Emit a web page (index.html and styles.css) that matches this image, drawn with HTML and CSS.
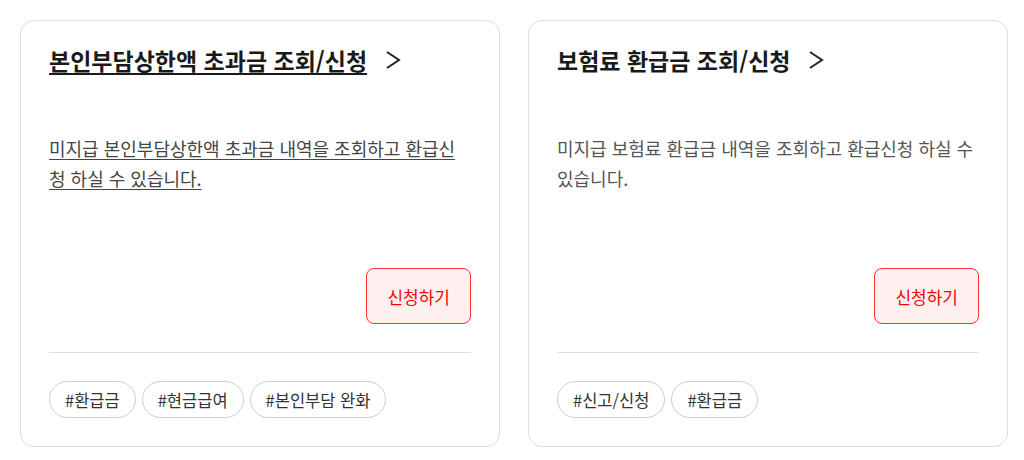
FILE: index.html
```html
<!DOCTYPE html>
<html lang="ko">
<head>
    <meta charset="UTF-8">
    <meta name="viewport" content="width=device-width, initial-scale=1.0">
    <title>환급금 조회/신청</title>
    <link rel="stylesheet" href="styles.css">
</head>
<body>
    <div class="card-list">
        <div class="card is-hover">
            <a class="card-title" href="#">
                <span class="title-text">본인부담상한액 초과금 조회/신청</span>
                <svg class="chevron" width="16" height="20" viewBox="0 0 16 20">
                    <polyline points="2,2 14,10 2,18" fill="none" stroke="#222" stroke-width="2"/>
                </svg>
            </a>
            <p class="card-desc">미지급 본인부담상한액 초과금 내역을 조회하고 환급신청 하실 수 있습니다.</p>
            <div class="card-action">
                <button class="apply-button">신청하기</button>
            </div>
            <div class="card-tags">
                <span class="tag">#환급금</span>
                <span class="tag">#현금급여</span>
                <span class="tag">#본인부담 완화</span>
            </div>
        </div>
        <div class="card">
            <a class="card-title" href="#">
                <span class="title-text">보험료 환급금 조회/신청</span>
                <svg class="chevron" width="16" height="20" viewBox="0 0 16 20">
                    <polyline points="2,2 14,10 2,18" fill="none" stroke="#222" stroke-width="2"/>
                </svg>
            </a>
            <p class="card-desc">미지급 보험료 환급금 내역을 조회하고 환급신청 하실 수 있습니다.</p>
            <div class="card-action">
                <button class="apply-button">신청하기</button>
            </div>
            <div class="card-tags">
                <span class="tag">#신고/신청</span>
                <span class="tag">#환급금</span>
            </div>
        </div>
    </div>
</body>
</html>
```

FILE: styles.css
```css
body {
    font-family: "Noto Sans CJK KR", "Noto Sans", sans-serif;
    margin: 0;
    padding: 20px 0 0 20px;
    background-color: #ffffff;
    color: #222;
}
.card-list {
    display: flex;
    gap: 28px;
}
.card {
    width: 480px;
    box-sizing: border-box;
    border: 1px solid #dddddd;
    border-radius: 14px;
    padding: 24px 28px 28px;
    display: flex;
    flex-direction: column;
}
.card-title {
    display: flex;
    align-items: center;
    gap: 18px;
    font-size: 23px;
    font-weight: 700;
    line-height: 30px;
    color: #1a1a1a;
    text-decoration: none;
}
.chevron {
    flex-shrink: 0;
}
.card-desc {
    margin: 58px 0 0;
    font-size: 18px;
    line-height: 30px;
    color: #555;
    word-break: break-all;
}
.card-action {
    display: flex;
    justify-content: flex-end;
    margin-top: 75px;
    padding-bottom: 28px;
    border-bottom: 1px solid #dddddd;
}
.apply-button {
    font-family: inherit;
    height: 56px;
    padding: 0 20px;
    font-size: 17px;
    color: #ff0000;
    background-color: #fff0f0;
    border: 1px solid #ff3030;
    border-radius: 8px;
    cursor: pointer;
}
.card-tags {
    display: flex;
    gap: 6px;
    margin-top: 28px;
}
.tag {
    display: inline-flex;
    align-items: center;
    height: 37px;
    box-sizing: border-box;
    padding: 0 15px;
    border: 1px solid #cccccc;
    border-radius: 19px;
    font-size: 16.5px;
    color: #333;
}
.is-hover .title-text {
    text-decoration: underline;
    text-decoration-thickness: 2px;
    text-underline-offset: 3px;
}
.is-hover .card-desc {
    text-decoration: underline;
    text-underline-offset: 3px;
    color: #444;
}
```
